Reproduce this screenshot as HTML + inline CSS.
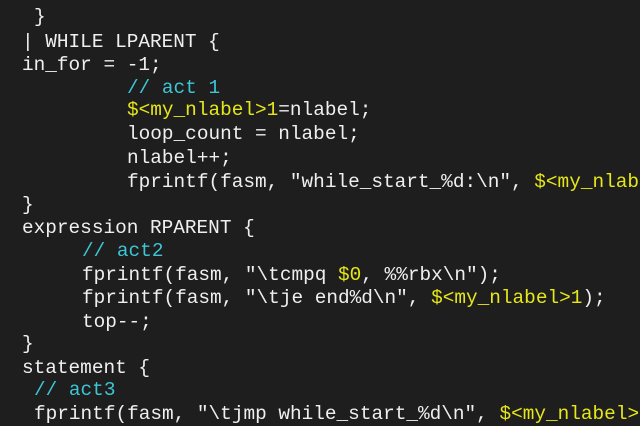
<html><head><style>
html,body{margin:0;background:#1e1e1e;width:640px;height:426px;overflow:hidden;}
.l{position:absolute;white-space:pre;font-family:"Liberation Mono",monospace;font-size:19.4px;line-height:23px;color:#efefef;}
.y{color:#e6e619}.c{color:#3cc6d6}
</style></head><body>
<div class="l" style="left:34px;top:6px">}</div>
<div class="l" style="left:22px;top:31px">| WHILE LPARENT {</div>
<div class="l" style="left:22px;top:54px">in_for = -1;</div>
<div class="l c" style="left:127px;top:77px">// act 1</div>
<div class="l" style="left:127px;top:99px"><span class="y">$&lt;my_nlabel&gt;1</span>=nlabel;</div>
<div class="l" style="left:127px;top:123px">loop_count = nlabel;</div>
<div class="l" style="left:127px;top:147px">nlabel++;</div>
<div class="l" style="left:127px;top:171px">fprintf(fasm, "while_start_%d:\n", <span class="y">$&lt;my_nlabel&gt;1</span>);</div>
<div class="l" style="left:22px;top:194px">}</div>
<div class="l" style="left:22px;top:217px">expression RPARENT {</div>
<div class="l c" style="left:82px;top:240px">// act2</div>
<div class="l" style="left:82px;top:264px">fprintf(fasm, "\tcmpq <span class="y">$0</span>, %%rbx\n");</div>
<div class="l" style="left:82px;top:287px">fprintf(fasm, "\tje end%d\n", <span class="y">$&lt;my_nlabel&gt;1</span>);</div>
<div class="l" style="left:82px;top:311px">top--;</div>
<div class="l" style="left:22px;top:333px">}</div>
<div class="l" style="left:22px;top:357px">statement {</div>
<div class="l c" style="left:34px;top:379px">// act3</div>
<div class="l" style="left:34px;top:403px">fprintf(fasm, "\tjmp while_start_%d\n", <span class="y">$&lt;my_nlabel&gt;1</span>);</div>
</body></html>
